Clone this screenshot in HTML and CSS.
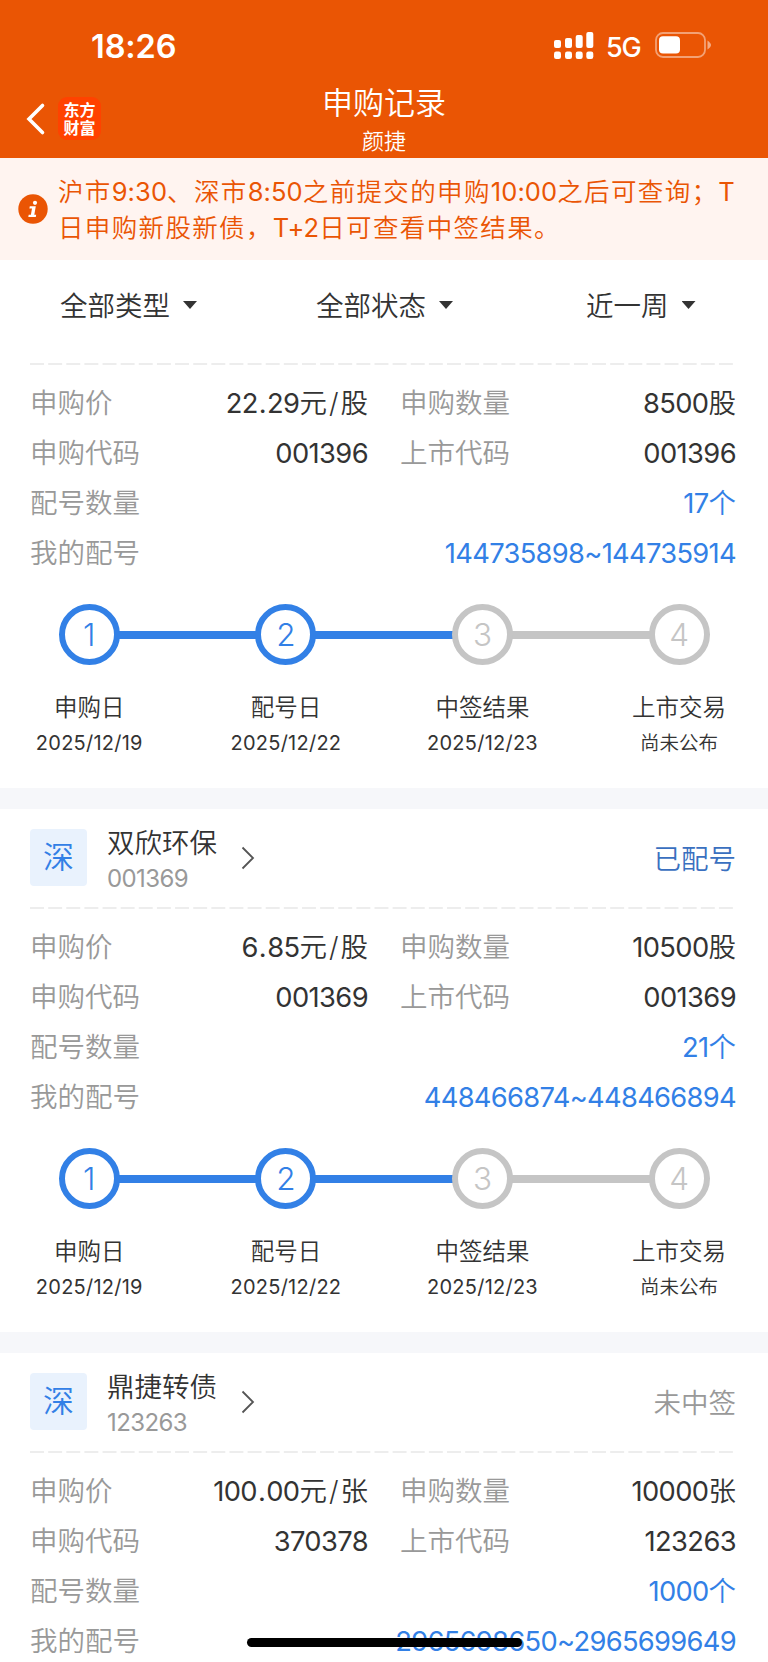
FILE: index.html
```html
<!DOCTYPE html>
<html lang="zh-CN">
<head>
<meta charset="utf-8">
<title>申购记录</title>
<link rel="stylesheet" href="styles.css">
</head>
<body>
<div class="screen">
  <header class="header">
    <div class="status-bar">
      <span class="clock">18:26</span>
      <div class="indicators">
        <svg class="signal" width="40" height="28" viewBox="0 0 40 28" fill="#fff">
          <rect x="0" y="8" width="7" height="8" rx="2"/><rect x="11" y="6" width="7" height="10" rx="2"/><rect x="21.7" y="3" width="7" height="13" rx="2"/><rect x="32.3" y="0" width="7" height="16" rx="2"/>
          <rect x="0" y="19.6" width="7" height="7.4" rx="2.2"/><rect x="11" y="19.6" width="7" height="7.4" rx="2.2"/><rect x="21.7" y="19.6" width="7" height="7.4" rx="2.2"/><rect x="32.3" y="19.6" width="7" height="7.4" rx="2.2"/>
        </svg>
        <span class="network">5G</span>
        <svg class="battery" width="56" height="26" viewBox="0 0 56 26">
          <rect x="1" y="1" width="49" height="24" rx="7" fill="none" stroke="#fff" stroke-opacity=".45" stroke-width="1.8"/>
          <rect x="4" y="4.3" width="21" height="17.2" rx="4" fill="#fff"/>
          <path d="M52.5 8.5Q56 11 56 13T52.5 17.5Z" fill="#fff" fill-opacity=".5"/>
        </svg>
      </div>
    </div>
    <nav class="nav">
      <div class="nav-left">
        <svg class="back" width="20" height="34" viewBox="0 0 20 34" fill="none" stroke="#fff" stroke-width="3.6" stroke-linecap="round" stroke-linejoin="miter"><path d="M16.5 3.5L3 17L16.5 30.5"/></svg>
        <div class="logo"><span>东方</span><span>财富</span></div>
      </div>
      <div class="nav-title"><h1>申购记录</h1><p>颜捷</p></div>
    </nav>
  </header>
  <section class="notice">
    <svg class="info" width="30" height="30" viewBox="0 0 30 30"><circle cx="15" cy="15" r="14.7" fill="#ea5504"/><g fill="#fff"><circle cx="17" cy="8.8" r="2.1"/><path d="M11.8 12.3H17.8L16.3 20.7H18.2L17.8 22.9H10.3L10.7 20.7H12.9L14 14.5H11.4Z"/></g></svg>
    <p><span class="line">沪市<span class="n">9:30</span>、深市<span class="n">8:50</span>之前提交的申购<span class="n">10:00</span>之后可查询；<span class="n">T</span></span><span class="line">日申购新股新债，<span class="n">T+2</span>日可查看中签结果。</span></p>
  </section>
  <div class="filters">
    <span class="filter">全部类型<i class="caret"></i></span>
    <span class="filter">全部状态<i class="caret"></i></span>
    <span class="filter">近一周<i class="caret"></i></span>
  </div>

  <article class="card card-first">
    <svg class="dash" width="706" height="2"><path d="M0 1H706"/></svg>
    <dl class="fields">
      <div><dt>申购价</dt><dd><span class="num">22<i class="dot">.</i>29</span>元<i class="slash">/</i>股</dd></div><div><dt>申购数量</dt><dd><span class="num">8500</span>股</dd></div>
      <div><dt>申购代码</dt><dd><span class="num">001396</span></dd></div><div><dt>上市代码</dt><dd><span class="num">001396</span></dd></div>
      <div class="wide"><dt>配号数量</dt><dd><span class="num">17</span>个</dd></div>
      <div class="wide"><dt>我的配号</dt><dd><span class="num">144735898~144735914</span></dd></div>
    </dl>
    <ol class="steps">
      <li class="done"><b>1</b><span>申购日</span><time>2025/12/19</time></li>
      <li class="done"><b>2</b><span>配号日</span><time>2025/12/22</time></li>
      <li><b>3</b><span>中签结果</span><time>2025/12/23</time></li>
      <li><b>4</b><span>上市交易</span><em>尚未公布</em></li>
    </ol>
  </article>

  <article class="card">
    <div class="card-head">
      <span class="market">深</span>
      <div class="stock"><h2>双欣环保</h2><p>001369</p></div>
      <svg class="more" width="14" height="24" viewBox="0 0 14 24"><path d="M1.5 1.5L12 12L1.5 22.5"/></svg>
      <span class="state allotted">已配号</span>
    </div>
    <svg class="dash" width="706" height="2"><path d="M0 1H706"/></svg>
    <dl class="fields">
      <div><dt>申购价</dt><dd><span class="num">6<i class="dot">.</i>85</span>元<i class="slash">/</i>股</dd></div><div><dt>申购数量</dt><dd><span class="num">10500</span>股</dd></div>
      <div><dt>申购代码</dt><dd><span class="num">001369</span></dd></div><div><dt>上市代码</dt><dd><span class="num">001369</span></dd></div>
      <div class="wide"><dt>配号数量</dt><dd><span class="num">21</span>个</dd></div>
      <div class="wide"><dt>我的配号</dt><dd><span class="num">448466874~448466894</span></dd></div>
    </dl>
    <ol class="steps">
      <li class="done"><b>1</b><span>申购日</span><time>2025/12/19</time></li>
      <li class="done"><b>2</b><span>配号日</span><time>2025/12/22</time></li>
      <li><b>3</b><span>中签结果</span><time>2025/12/23</time></li>
      <li><b>4</b><span>上市交易</span><em>尚未公布</em></li>
    </ol>
  </article>

  <article class="card">
    <div class="card-head">
      <span class="market">深</span>
      <div class="stock"><h2>鼎捷转债</h2><p>123263</p></div>
      <svg class="more" width="14" height="24" viewBox="0 0 14 24"><path d="M1.5 1.5L12 12L1.5 22.5"/></svg>
      <span class="state">未中签</span>
    </div>
    <svg class="dash" width="706" height="2"><path d="M0 1H706"/></svg>
    <dl class="fields">
      <div><dt>申购价</dt><dd><span class="num">100<i class="dot">.</i>00</span>元<i class="slash">/</i>张</dd></div><div><dt>申购数量</dt><dd><span class="num">10000</span>张</dd></div>
      <div><dt>申购代码</dt><dd><span class="num">370378</span></dd></div><div><dt>上市代码</dt><dd><span class="num">123263</span></dd></div>
      <div class="wide"><dt>配号数量</dt><dd><span class="num">1000</span>个</dd></div>
      <div class="wide"><dt>我的配号</dt><dd><span class="num">2965698650~2965699649</span></dd></div>
    </dl>
  </article>
  <div class="home-indicator"></div>
</div>
</body>
</html>
```

FILE: styles.css
```css
* { box-sizing: border-box; margin: 0; padding: 0; }
body {
  width: 768px;
  font-family: Inter, "Noto Sans CJK SC", sans-serif;
  font-weight: 350;
  color: #333;
  background: #fff;
}
svg { display: block; flex: none; }
i { font-style: normal; }
.screen { position: relative; width: 768px; height: 1662px; overflow: hidden; }

.header { height: 158px; background: #ea5504; color: #fff; }
.status-bar { display: flex; justify-content: space-between; height: 86px; padding: 0 57px 0 91px; }
.clock { height: 40px; margin-top: 27px; font-size: 32.5px; line-height: 40px; font-weight: 600; letter-spacing: -.1px; }
.indicators { display: flex; align-items: flex-start; }
.signal { margin-top: 32px; }
.network { width: 36px; margin: 30px 13px 0 12px; font-size: 27px; line-height: 36px; font-weight: 500; letter-spacing: -1.2px; white-space: nowrap; }
.battery { margin-top: 32px; }
.nav { display: grid; grid-template-columns: 150px 1fr 150px; height: 72px; }
.nav-left { display: flex; gap: 12px; padding: 11px 0 0 26px; }
.back { margin-top: 5px; }
.logo {
  display: flex; flex-direction: column; align-items: center; justify-content: center;
  width: 43px; height: 43px; border-radius: 9px; background: #ff4200;
  font-weight: 700; font-size: 16px; line-height: 18px;
}
.nav-title { text-align: center; }
.nav-title h1 { font-size: 31px; line-height: 34px; font-weight: 350; }
.nav-title p { margin-top: 5px; font-size: 22px; line-height: 32px; }

.notice { display: flex; align-items: center; gap: 10px; height: 102px; padding: 0 0 0 18px; background: #fff4f0; color: #ea5504; }
.notice p { padding-top: 2px; font-size: 25.5px; line-height: 36px; letter-spacing: 1.35px; }
.n { font-weight: 400; letter-spacing: .1px; }
.line { display: block; white-space: nowrap; }

.filters { display: grid; grid-template-columns: 256px 270px 1fr; height: 103px; padding: 26px 0 0 60px; }
.filter { display: flex; align-items: center; height: 40px; font-size: 27.5px; line-height: 40px; }
.caret { width: 14px; height: 8px; margin: -2px 0 0 13px; background: #333; clip-path: polygon(0 0, 100% 0, 50% 100%); }

.card { height: 543.7px; border-bottom: 21px solid #f6f7fa; }
.card-first { height: 446px; }
.dash { margin-left: 30px; fill: none; stroke: #e8e8e8; stroke-width: 1.6; stroke-dasharray: 14 4.13; }
.card-head { display: flex; align-items: flex-start; height: 98px; padding: 20px 32px 0 30px; }
.market { width: 57px; height: 57px; border-radius: 4px; background: #e9f2fd; color: #3280e6; font-size: 31px; line-height: 56px; text-align: center; }
.stock { width: 112px; margin-left: 20px; }
.stock h2 { margin: -5px 0 1px; font-size: 27.5px; line-height: 38px; font-weight: 350; }
.stock p { font-size: 24px; line-height: 32px; font-weight: 400; color: #999; letter-spacing: -.6px; }
.more { margin: 17px 0 0 22px; fill: none; stroke: #555; stroke-width: 1.8; }
.state { margin: 10px 0 0 auto; font-size: 27.5px; line-height: 40px; color: #999; }
.state.allotted { color: #3a70c0; }

.fields { display: grid; grid-template-columns: 338px 336px; column-gap: 32px; grid-auto-rows: 50px; padding: 13px 0 0 30px; font-size: 27.5px; line-height: 50px; }
.fields div { display: flex; justify-content: space-between; white-space: nowrap; }
.fields .wide { grid-column: 1 / -1; }
.fields dt { color: #999; }
.wide dd { color: #3280e6; }
.num { font-size: 27.3px; font-weight: 400; letter-spacing: -.6px; }
.wide .num { letter-spacing: -.68px; }
.dot { margin: 0 1px; }
.slash { margin: 0 2px; }

.steps { display: grid; grid-template-columns: repeat(4, 196.6px); width: 787px; margin: 26px 0 0 -9px; list-style: none; text-align: center; }
.steps li { display: grid; justify-items: center; position: relative; }
.steps b {
  position: relative; z-index: 1; width: 61px; height: 61px; border: 6px solid #c5c5c5; border-radius: 50%;
  background: #fff; color: #c5c5c5; font-size: 31.5px; line-height: 49px; font-weight: 300;
}
.steps li:not(:last-child)::after { content: ""; position: absolute; left: 50%; top: 27px; width: 100%; height: 8px; background: #c5c5c5; }
.steps .done::after { background: #3280e6 !important; }
.steps .done b { border-color: #3280e6; color: #3280e6; }
.steps span { margin-top: 25px; font-size: 23.5px; line-height: 36px; }
.steps time, .steps em { font-size: 19.5px; line-height: 34px; font-style: normal; }
.steps time { font-size: 20px; font-weight: 400; letter-spacing: .25px; }

.home-indicator { position: absolute; left: 247px; top: 1638px; width: 275px; height: 9px; border-radius: 5px; background: #000; }
```
